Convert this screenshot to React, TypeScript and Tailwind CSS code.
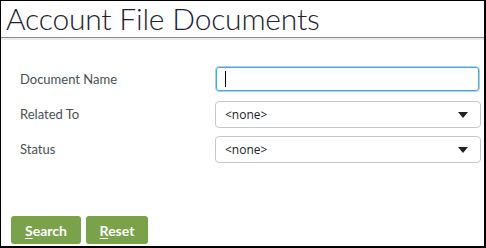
import React from "react"

const labelFont = { fontFamily: "Lato, 'Noto Sans', sans-serif" }

function SelectBox({ value }: { value: string }) {
  return (
    <div className="flex h-[27px] w-[266px] items-center justify-between rounded-[4px] border border-[#c4c8cc] bg-white pl-[9px] pr-[12px]">
      <span className="text-[12px] text-[#222] font-['Open_Sans',sans-serif]">{value}</span>
      <svg width="10" height="6" viewBox="0 0 10 6">
        <path d="M0 0 L10 0 L5 6 Z" fill="#222" />
      </svg>
    </div>
  )
}

export default function App() {
  return (
    <div className="flex h-[248px] w-[486px] flex-col border-t border-l border-r-2 border-b-2 border-black bg-white">
      {/* Header */}
      <div className="h-[36px] pl-[5px]">
        <h1 className="text-[30px] font-light leading-[34px] text-[#1d2333] font-['Lato',sans-serif] tracking-[-0.2px]">
          Account File Documents
        </h1>
      </div>
      <div className="h-[1px] bg-[#8a8a8a]" />
      <div className="h-[2px] bg-[#ececec]" />

      {/* Form */}
      <div className="flex flex-col pl-[19px] pt-[26px]" style={labelFont}>
        <div className="flex items-center">
          <span className="w-[195px] pt-[1px] text-[13px] text-[#4a4f55]">Document Name</span>
          <div className="h-[26px] w-[265px] rounded-[4px] border border-[#c4c8cc]">
            <div className="flex h-full w-full items-center rounded-[3px] border-[1.5px] border-[#2ab4f0] pl-[8px]">
              <div className="h-[16px] w-[1px] bg-black" />
            </div>
          </div>
        </div>
        <div className="mt-[9px] flex items-center">
          <span className="w-[195px] text-[13px] text-[#4a4f55]">Related To</span>
          <SelectBox value="<none>" />
        </div>
        <div className="mt-[8px] flex items-center">
          <span className="w-[195px] text-[13px] text-[#4a4f55]">Status</span>
          <SelectBox value="<none>" />
        </div>
      </div>

      {/* Buttons */}
      <div className="mt-auto flex gap-[5px] pb-[2px] pl-[10px]" style={labelFont}>
        <button className="h-[28px] w-[70px] rounded-[3px] bg-[#79a24b] text-[14px] font-bold text-white">
          <span className="underline underline-offset-2">S</span>earch
        </button>
        <button className="h-[28px] w-[62px] rounded-[3px] bg-[#79a24b] text-[14px] font-bold text-white">
          <span className="underline underline-offset-2">R</span>eset
        </button>
      </div>
    </div>
  )
}
